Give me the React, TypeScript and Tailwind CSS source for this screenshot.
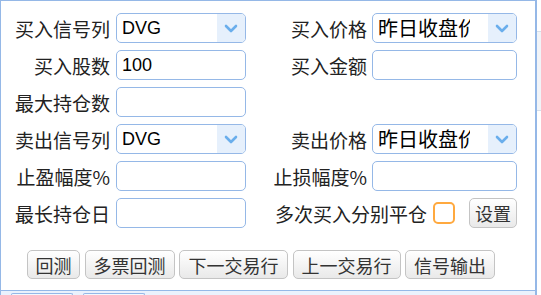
const cjk = "font-['Noto_Sans_CJK_SC',sans-serif]";
const latin = "font-['Liberation_Sans','Noto_Sans_CJK_SC',sans-serif]";

function Label({ text, className = "" }: { text: string; className?: string }) {
  return (
    <div className={`flex items-center justify-end whitespace-nowrap text-[19px] leading-none text-[#222] ${cjk} ${className}`}>
      {text}
    </div>
  );
}

function Field({ value = "", className = "" }: { value?: string; className?: string }) {
  return (
    <div
      className={`flex h-[30px] items-center rounded-[5px] border border-[#95b8e7] bg-white pl-[5px] text-[18px] text-black ${latin} ${className}`}
    >
      {value}
    </div>
  );
}

function Chevron() {
  return (
    <svg width="14" height="9" viewBox="0 0 14 9" fill="none">
      <path d="M2 2l5 5 5-5" stroke="#6aaeec" strokeWidth="2.6" strokeLinecap="round" strokeLinejoin="round" />
    </svg>
  );
}

function Select({ value, cn, className = "" }: { value: string; cn?: boolean; className?: string }) {
  return (
    <div className={`flex h-[30px] overflow-hidden rounded-[5px] border border-[#95b8e7] bg-white ${className}`}>
      <div
        className={`flex flex-1 items-center overflow-hidden whitespace-nowrap pl-[5px] text-black ${
          cn ? `text-[20px] ${cjk}` : `text-[18px] ${latin}`
        }`}
      >
        <span className={cn ? "block w-[92px] overflow-hidden" : ""}>{value}</span>
      </div>
      <div className="flex w-[28px] items-center justify-center bg-[#e6f0fc]">
        <Chevron />
      </div>
    </div>
  );
}

function Button({ text, className = "" }: { text: string; className?: string }) {
  return (
    <div
      className={`flex h-[29px] items-center justify-center rounded-[5px] border border-[#c4c4c4] bg-gradient-to-b from-white to-[#e9e9e9] text-[18px] leading-none text-[#333] ${cjk} ${className}`}
    >
      {text}
    </div>
  );
}

export default function App() {
  return (
    <div className="flex h-[295px] w-[541px] overflow-hidden bg-white">
      <div className="flex w-[536px] flex-col">
        <div className="h-[290px] border-l border-r border-t border-[#95b8e7] pt-[12px]">
          <div className="grid grid-cols-[115px_130px_126px_145px] grid-rows-[30px_30px_30px_30px_30px_30px] gap-y-[7px]">
            <Label text="买入信号列" className="pr-[6px]" />
            <Select value="DVG" />
            <Label text="买入价格" className="pr-[5px]" />
            <Select value="昨日收盘价" cn />

            <Label text="买入股数" className="pr-[6px]" />
            <Field value="100" />
            <Label text="买入金额" className="pr-[5px]" />
            <Field />

            <Label text="最大持仓数" className="pr-[6px]" />
            <Field />
            <div />
            <div />

            <Label text="卖出信号列" className="pr-[6px]" />
            <Select value="DVG" />
            <Label text="卖出价格" className="pr-[5px]" />
            <Select value="昨日收盘价" cn />

            <Label text="止盈幅度%" className="pr-[6px]" />
            <Field />
            <Label text="止损幅度%" className="pr-[5px]" />
            <Field />

            <Label text="最长持仓日" className="pr-[6px]" />
            <Field />
            <div className="col-span-2 flex items-center justify-end">
              <Label text="多次买入分别平仓" />
              <div className="ml-[6px] h-[22px] w-[22px] rounded-[5px] border-2 border-[#ffa93f] bg-white" />
              <Button text="设置" className="ml-[14px] h-[30px] w-[48px]" />
            </div>
          </div>

          <div className="mt-[22px] flex gap-[4.5px] pl-[26px]">
            <Button text="回测" className="w-[53px]" />
            <Button text="多票回测" className="w-[90px]" />
            <Button text="下一交易行" className="w-[109px]" />
            <Button text="上一交易行" className="w-[108px]" />
            <Button text="信号输出" className="w-[90px]" />
          </div>
        </div>
        <div className="flex h-[5px] gap-[10px] border-l border-r border-t border-[#95b8e7] bg-[#eaf2fd] pl-[10px] pt-[2px]">
          <div className="w-[62px] rounded-t-[5px] border border-b-0 border-[#95b8e7] bg-[#f4f8fe]" />
          <div className="w-[62px] rounded-t-[5px] border border-b-0 border-[#95b8e7] bg-[#f4f8fe]" />
        </div>
      </div>
      <div className="flex flex-1 flex-col border-l border-[#95b8e7]">
        <div className="h-[32px] border-b border-[#d5dfea] bg-white" />
        <div className="h-[79px] border-b border-[#d5dfea] bg-[#f1f4f8]" />
        <div className="flex-1 bg-white" />
      </div>
    </div>
  );
}
